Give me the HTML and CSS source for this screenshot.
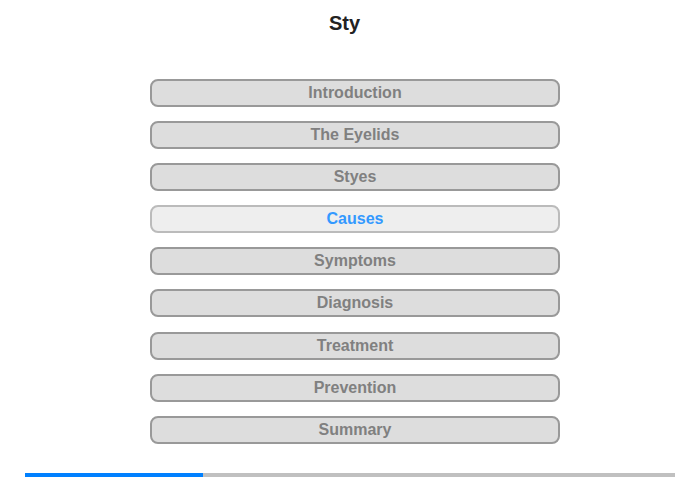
FILE: index.html
```html
<!DOCTYPE html>
<html lang="en">
<head>
    <meta charset="UTF-8">
    <title>Sty</title>
    <link rel="stylesheet" href="styles.css">
</head>
<body>
    <h1 class="title">Sty</h1>

    <div class="menu">
        <button class="menu-item">Introduction</button>
        <button class="menu-item">The Eyelids</button>
        <button class="menu-item">Styes</button>
        <button class="menu-item active">Causes</button>
        <button class="menu-item">Symptoms</button>
        <button class="menu-item">Diagnosis</button>
        <button class="menu-item">Treatment</button>
        <button class="menu-item">Prevention</button>
        <button class="menu-item">Summary</button>
    </div>

    <div class="progress">
        <div class="progress-fill" style="width: 27.4%"></div>
    </div>
</body>
</html>
```

FILE: styles.css
```css
body {
    margin: 0;
    background: #ffffff;
    font-family: 'Liberation Sans', Arial, sans-serif;
}

.title {
    margin: 0;
    padding: 11px 11px 0 0;
    height: 79px;
    box-sizing: border-box;
    text-align: center;
    font-size: 20px;
    line-height: 24px;
    font-weight: bold;
    color: #222222;
}

.menu {
    display: flex;
    flex-direction: column;
    align-items: center;
    gap: 14.1px;
    padding-left: 10px;
}

.menu-item {
    width: 410px;
    height: 28px;
    padding: 0;
    border: 2px solid #999999;
    border-radius: 8px;
    background: #dddddd;
    color: #808080;
    font-family: 'Liberation Sans', Arial, sans-serif;
    font-size: 16px;
    font-weight: bold;
    cursor: pointer;
}

.menu-item.active {
    background: #eeeeee;
    border-color: #bbbbbb;
    color: #3399ff;
}

.progress {
    margin: 29px 25px 0;
    height: 4px;
    background: #c0c0c0;
}

.progress-fill {
    height: 100%;
    background: #0080ff;
}
```
